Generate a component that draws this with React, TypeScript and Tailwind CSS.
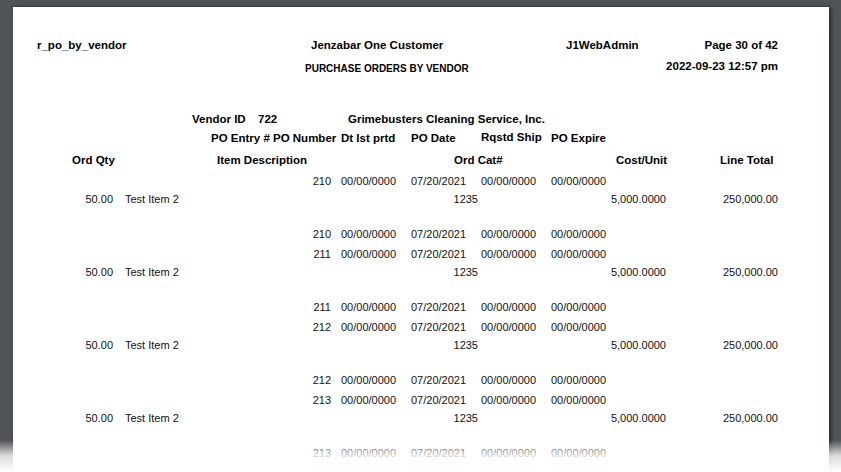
const font = { fontFamily: '"Liberation Sans", Arial, sans-serif' };

function PoRow({ entry, mt }: { entry: string; mt: string }) {
  return (
    <div className={`flex h-[14px] items-center text-[11px] text-[#111] ${mt}`}>
      <span className="w-[318px] text-right">{entry}</span>
      <span className="ml-[10px] w-[70px]">00/00/0000</span>
      <span className="w-[70px]">07/20/2021</span>
      <span className="w-[70px]">00/00/0000</span>
      <span className="w-[70px]">00/00/0000</span>
    </div>
  );
}

function ItemRow() {
  return (
    <div className="mt-[4px] flex h-[14px] items-center text-[11px] text-[#111]">
      <span className="w-[100px] text-right">50.00</span>
      <span className="ml-[12px] w-[200px]">Test Item 2</span>
      <span className="w-[153px] text-right">1235</span>
      <span className="w-[188px] text-right">5,000.0000</span>
      <span className="w-[112px] text-right">250,000.00</span>
    </div>
  );
}

export default function App() {
  return (
    <div className="relative h-[472px] w-[841px] overflow-hidden bg-[#505457] pl-[13px] pt-[7px]" style={font}>
      <div className="h-[480px] w-[816px] bg-white shadow-[2px_0_4px_rgba(0,0,0,0.5)]">
        {/* Header */}
        <div className="flex pt-[30px] text-[11.5px] font-bold text-black">
          <span className="ml-[24px] w-[274px]">r_po_by_vendor</span>
          <span className="w-[255px]">Jenzabar One Customer</span>
          <span className="w-[100px]">J1WebAdmin</span>
          <span className="w-[112px] text-right">Page 30 of 42</span>
        </div>
        <div className="mt-[4px] flex text-[11.5px] font-bold text-black">
          <span className="ml-[292px] w-[270px] pt-[3px] text-[10px]">PURCHASE ORDERS BY VENDOR</span>
          <span className="w-[203px] text-right">2022-09-23 12:57 pm</span>
        </div>

        {/* Vendor */}
        <div className="mt-[35px] flex text-[11.5px] font-bold text-black">
          <span className="ml-[179px] w-[66px]">Vendor ID</span>
          <span className="w-[90px]">722</span>
          <span>Grimebusters Cleaning Service, Inc.</span>
        </div>
        <div className="mt-[1px] flex text-[11.5px] font-bold text-black">
          <span className="ml-[198px] w-[130px]">PO Entry # PO Number</span>
          <span className="w-[70px]">Dt Ist prtd</span>
          <span className="w-[70px]">PO Date</span>
          <span className="w-[70px] -translate-y-[1px]">Rqstd Ship</span>
          <span className="w-[70px]">PO Expire</span>
        </div>
        <div className="mt-[5px] flex text-[11.5px] font-bold text-black">
          <span className="ml-[59px] w-[145px]">Ord Qty</span>
          <span className="w-[237px]">Item Description</span>
          <span className="w-[162px]">Ord Cat#</span>
          <span className="w-[104px]">Cost/Unit</span>
          <span>Line Total</span>
        </div>

        <PoRow entry="210" mt="mt-[5px]" />
        <ItemRow />
        <PoRow entry="210" mt="mt-[21px]" />
        <PoRow entry="211" mt="mt-[6px]" />
        <ItemRow />
        <PoRow entry="211" mt="mt-[21px]" />
        <PoRow entry="212" mt="mt-[6px]" />
        <ItemRow />
        <PoRow entry="212" mt="mt-[21px]" />
        <PoRow entry="213" mt="mt-[6px]" />
        <ItemRow />
        <PoRow entry="213" mt="mt-[21px]" />
        <PoRow entry="214" mt="mt-[6px]" />
      </div>
      {/* bottom fade */}
      <div className="absolute bottom-0 left-0 h-[32px] w-full bg-gradient-to-b from-white/0 via-white/80 to-white" />
    </div>
  );
}
